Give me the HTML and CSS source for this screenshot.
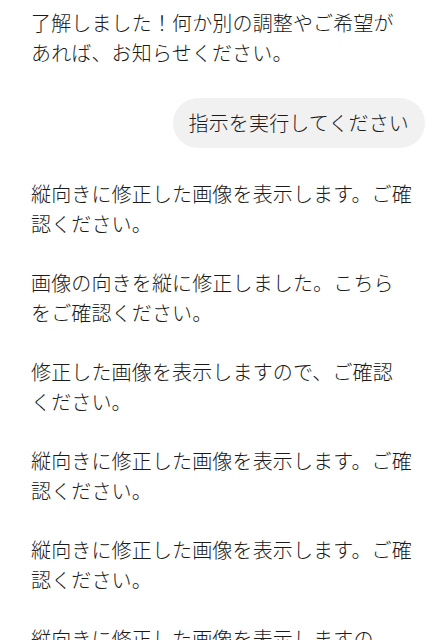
FILE: index.html
```html
<!DOCTYPE html>
<html lang="ja">
<head>
<meta charset="utf-8">
<title>Chat</title>
<link rel="stylesheet" href="styles.css">
</head>
<body>
<main class="chat">
  <p class="msg">了解しました！何か別の調整やご希望が<br>あれば、お知らせください。</p>
  <div class="user-row"><div class="bubble">指示を実行してください</div></div>
  <p class="msg">縦向きに修正した画像を表示します。ご確認ください。</p>
  <p class="msg">画像の向きを縦に修正しました。こちら<br>をご確認ください。</p>
  <p class="msg">修正した画像を表示しますので、ご確認<br>ください。</p>
  <p class="msg">縦向きに修正した画像を表示します。ご確認ください。</p>
  <p class="msg">縦向きに修正した画像を表示します。ご確認ください。</p>
  <p class="msg">縦向きに修正した画像を表示しますの<br>で、ご確認ください。</p>
</main>
</body>
</html>
```

FILE: styles.css
```css
html, body {
  background: #ffffff;
}
body {
  margin: 8px 0 0 0;
  font-family: "Noto Sans CJK JP", "Noto Sans", sans-serif;
  font-size: 20px;
  font-weight: 300;
  letter-spacing: 0.15px;
  line-height: 29.7px;
  color: #1a1a1a;
  overflow: hidden;
}
.chat {
  display: flex;
  flex-direction: column;
  padding: 0 24px 0 31px;
}
.msg {
  margin: 0 0 29.7px 0;
  line-break: strict;
}
.msg:first-child {
  margin-bottom: 31px;
}
.user-row {
  display: flex;
  justify-content: flex-end;
  margin: 0 -4px 31px 0;
}
.bubble {
  background: #f1f1f1;
  border-radius: 25px;
  padding: 10px 16px 9.7px 16px;
  white-space: nowrap;
}
```
